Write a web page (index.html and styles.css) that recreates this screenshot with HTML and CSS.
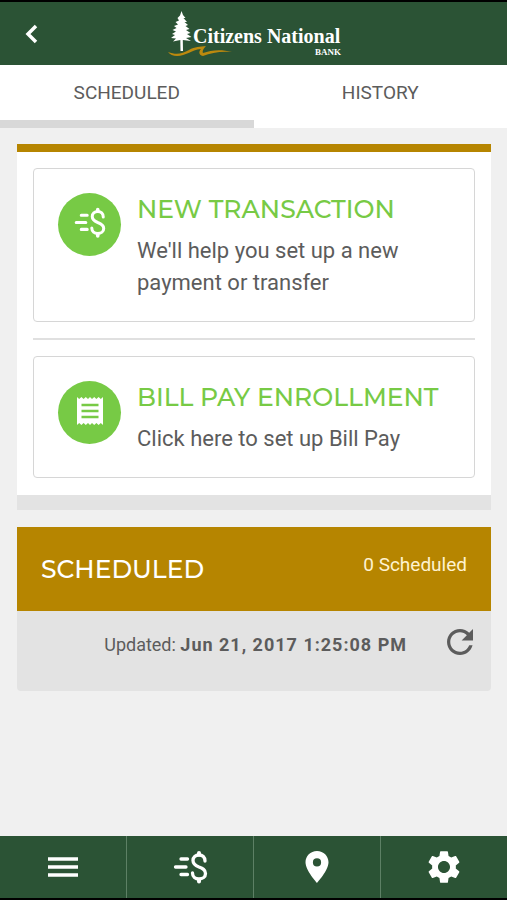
FILE: index.html
```html
<!DOCTYPE html>
<html lang="en">
<head>
<meta charset="utf-8">
<meta name="viewport" content="width=device-width, initial-scale=1">
<title>Citizens National Bank</title>
<link rel="stylesheet" href="styles.css">
</head>
<body>
<svg class="sprite" aria-hidden="true">
  <symbol id="transfer" viewBox="0 0 36 36">
    <g fill="none" stroke="currentColor" stroke-width="3.300" stroke-linecap="round">
      <path d="M9 10H15.500M3.500 18H14M9 25.500H15.500"/>
      <path d="M33 12C33 8 30.500 6 27 6C23.500 6 21 8 21 11.500C21 15.500 24 16.800 27 18C30.500 19.300 33.500 20.500 33.500 24.500C33.500 28 30.500 30 27 30C23.500 30 20.500 28 20.500 24"/>
      <path stroke-width="4" d="M27 4V5.500M27 31V32.500"/>
    </g>
  </symbol>
</svg>
<header class="topbar">
  <button class="back" type="button" aria-label="Back">
    <svg width="14" height="20" viewBox="0 0 14 20"><path d="M11 2L3 10L11 18" fill="none" stroke="currentColor" stroke-width="3.500"/></svg>
  </button>
  <svg class="logo" width="176" height="48" viewBox="-2 0 176 48" role="img" aria-label="Citizens National Bank">
    <path fill="#fff" d="M13.500 1L15 5L17.500 8L15.500 8L19 12L16.500 12L20 15L17.500 16L21.500 19L18 20L22.500 23L19 24L23.500 27L18 28L23 31L14.800 30L15 41H12.500L12.300 30L5 31.500L8 28.500L3 28L7 25L4 24L8 21.500L4.500 20L8.500 18L6 16L10 14.500L7.500 12L11 10.500L9.500 8L12 5.500Z"/>
    <path fill="#bd890e" d="M0 42C8 45 14 44 21 40C27 36.500 32 37 38 36C36 38 34 41 35 43C43 40 53 39 64 42C52 41 43 43 35 46C30 45 31 41 33 39C23 40 18 46 9 46C5 46 2 44.500 0 42Z"/>
    <text class="logo-name" x="25" y="33">Citizens National</text>
    <text class="logo-bank" x="173" y="45" text-anchor="end">BANK</text>
  </svg>
</header>
<nav class="tabs">
  <a class="tab active" href="#scheduled">SCHEDULED</a>
  <a class="tab" href="#history">HISTORY</a>
</nav>
<main class="content">
  <section class="panel">
    <a class="action" href="#new">
      <span class="badge"><svg width="33" height="33"><use href="#transfer"/></svg></span>
      <span class="action-text">
        <strong class="title">NEW TRANSACTION</strong>
        <span class="desc">We'll help you set up a new payment or transfer</span>
      </span>
    </a>
    <hr class="rule">
    <a class="action" href="#enroll">
      <span class="badge">
        <svg width="28" height="30" viewBox="0 0 28 30"><path fill="#fff" d="M1 1L3.200 3L5.400 1L7.600 3L9.800 1L12 3L14 1L16 3L18.200 1L20.400 3L22.600 1L24.800 3L27 1V29L24.800 27L22.600 29L20.400 27L18.200 29L16 27L14 29L12 27L9.800 29L7.600 27L5.400 29L3.200 27L1 29Z"/><path stroke="#77ca45" stroke-width="2.500" d="M5.500 9H22.500M5.500 15H22.500M5.500 21H22.500"/></svg>
      </span>
      <span class="action-text">
        <strong class="title">BILL PAY ENROLLMENT</strong>
        <span class="desc">Click here to set up Bill Pay</span>
      </span>
    </a>
  </section>
  <section class="scheduled" id="scheduled">
    <div class="scheduled-head">
      <h2 class="scheduled-title">SCHEDULED</h2>
      <span class="count">0 Scheduled</span>
    </div>
    <div class="updated">
      <p class="updated-text">Updated: <b class="date">Jun 21, 2017 1:25:08 PM</b></p>
      <button class="refresh" type="button" aria-label="Refresh">
        <svg width="26" height="26" viewBox="4 4 16 16"><path fill="currentColor" d="M17.650 6.350C16.200 4.900 14.210 4 12 4c-4.420 0-7.990 3.580-7.990 8s3.570 8 7.990 8c3.730 0 6.840-2.550 7.730-6h-2.080c-.82 2.330-3.040 4-5.650 4-3.310 0-6-2.690-6-6s2.690-6 6-6c1.660 0 3.140.69 4.220 1.780L13 11h7V4l-2.350 2.350z"/></svg>
      </button>
    </div>
  </section>
</main>
<nav class="bottombar">
  <a class="item" href="#menu" aria-label="Menu"><svg width="30" height="22" viewBox="0 0 30 22"><path stroke="currentColor" stroke-width="3.400" d="M0 3H30M0 11H30M0 19H30"/></svg></a>
  <a class="item" href="#pay" aria-label="Payments"><svg width="36" height="36"><use href="#transfer"/></svg></a>
  <a class="item" href="#places" aria-label="Locations"><svg width="24" height="32" viewBox="0 0 24 32"><path fill="currentColor" fill-rule="evenodd" d="M12 0C5.400 0 .5 5 .5 11.300C.5 19.500 12 32 12 32S23.500 19.500 23.500 11.300C23.500 5 18.600 0 12 0ZM12 7.300A4.100 4.100 0 1 1 12 15.500A4.100 4.100 0 0 1 12 7.300Z"/></svg></a>
  <a class="item" href="#settings" aria-label="Settings"><svg width="38" height="38" viewBox="0 0 24 24"><path fill="currentColor" d="M19.430 12.980c.04-.32.07-.64.07-.98s-.03-.66-.07-.98l2.110-1.650c.19-.15.24-.42.12-.64l-2-3.460c-.12-.22-.39-.3-.61-.22l-2.490 1c-.52-.4-1.080-.73-1.690-.98l-.38-2.650C14.460 2.180 14.250 2 14 2h-4c-.25 0-.46.18-.49.42l-.38 2.650c-.61.25-1.170.59-1.690.98l-2.490-1c-.23-.09-.49 0-.61.22l-2 3.460c-.13.22-.07.49.12.64l2.110 1.650c-.04.32-.07.65-.07.98s.03.66.07.98l-2.110 1.650c-.19.15-.24.42-.12.64l2 3.460c.12.22.39.3.61.22l2.490-1c.52.4 1.080.73 1.690.98l.38 2.650c.03.24.24.42.49.42h4c.25 0 .46-.18.49-.42l.38-2.650c.61-.25 1.170-.59 1.690-.98l2.490 1c.23.09.49 0 .61-.22l2-3.460c.12-.22.07-.49-.12-.64l-2.110-1.650zM12 15.800c-2.090 0-3.800-1.710-3.800-3.800s1.710-3.800 3.800-3.800 3.800 1.710 3.800 3.800-1.710 3.800-3.800 3.800z"/></svg></a>
</nav>
</body>
</html>
```

FILE: styles.css
```css
* { box-sizing: border-box; }
body {
  margin: 0;
  min-height: 100vh;
  display: flex;
  flex-direction: column;
  background: #f0f0f0;
  color: #5c5c5c;
  font-family: Roboto, "Liberation Sans", sans-serif;
}
a { color: inherit; text-decoration: none; }
button { border: 0; padding: 0; background: none; color: inherit; }
svg { display: block; }
.sprite { position: absolute; width: 0; height: 0; }

.topbar {
  display: grid;
  grid-template-columns: 64px 1fr 64px;
  align-items: center;
  height: 65px;
  border-top: 2px solid #000;
  background: #2b5335;
  color: #fff;
}
.back { justify-self: center; }
.logo { justify-self: center; }
.logo-name { fill: #fff; font: bold 20px "Liberation Serif", serif; }
.logo-bank { fill: #fff; font: bold 9px "Liberation Serif", serif; }

.tabs { display: flex; background: #fff; }
.tab {
  flex: 1;
  padding: 16px 0 15px;
  border-bottom: 8px solid #fff;
  text-align: center;
  font-size: 19px;
  line-height: 24px;
}
.tab.active { border-color: #d8d8d8; }

.content { flex: 1; padding: 16px 16px 16px 17px; }
.panel {
  padding: 16px 16px 17px;
  border-top: 8px solid #b68500;
  background: #fff;
  box-shadow: 0 15px 0 #e3e3e3;
}
.action {
  display: flex;
  gap: 16px;
  padding: 24px 24px 22px;
  border: 1px solid #d6d6d6;
  border-radius: 4px;
}
.badge {
  flex: none;
  display: grid;
  place-items: center;
  width: 63px;
  height: 63px;
  padding-bottom: 4px;
  border-radius: 50%;
  background: #77ca45;
  color: #fff;
}
.action-text { display: flex; flex-direction: column; gap: 10px; }
.title {
  color: #77ca45;
  font: 500 25px/32px "Montserrat", "Inter", sans-serif;
  white-space: nowrap;
}
.desc { font-size: 22px; line-height: 32px; }
.rule { height: 2px; margin: 16px 0; border: 0; background: #e0e0e0; }

.scheduled { margin-top: 32px; }
.scheduled-head {
  display: flex;
  justify-content: space-between;
  align-items: flex-start;
  padding: 26px 24px;
  background: #b68500;
  color: #fff;
}
.scheduled-title { margin: 0; font: 500 25px/32px "Montserrat", "Inter", sans-serif; }
.count { font-size: 19px; line-height: 24px; color: #fff3d0; }
.updated {
  display: flex;
  justify-content: flex-end;
  align-items: flex-start;
  gap: 40px;
  padding: 18px 18px 30px;
  border-radius: 0 0 4px 4px;
  background: #e3e3e3;
}
.updated-text { margin: 0; font-size: 18px; line-height: 32px; }
.date { letter-spacing: 1px; }

.bottombar {
  display: flex;
  height: 64px;
  border-bottom: 2px solid #000;
  background: #2b5335;
  color: #fff;
}
.item { flex: 1; display: grid; place-items: center; }
.item + .item { border-left: 1px solid #5d8065; }
```
